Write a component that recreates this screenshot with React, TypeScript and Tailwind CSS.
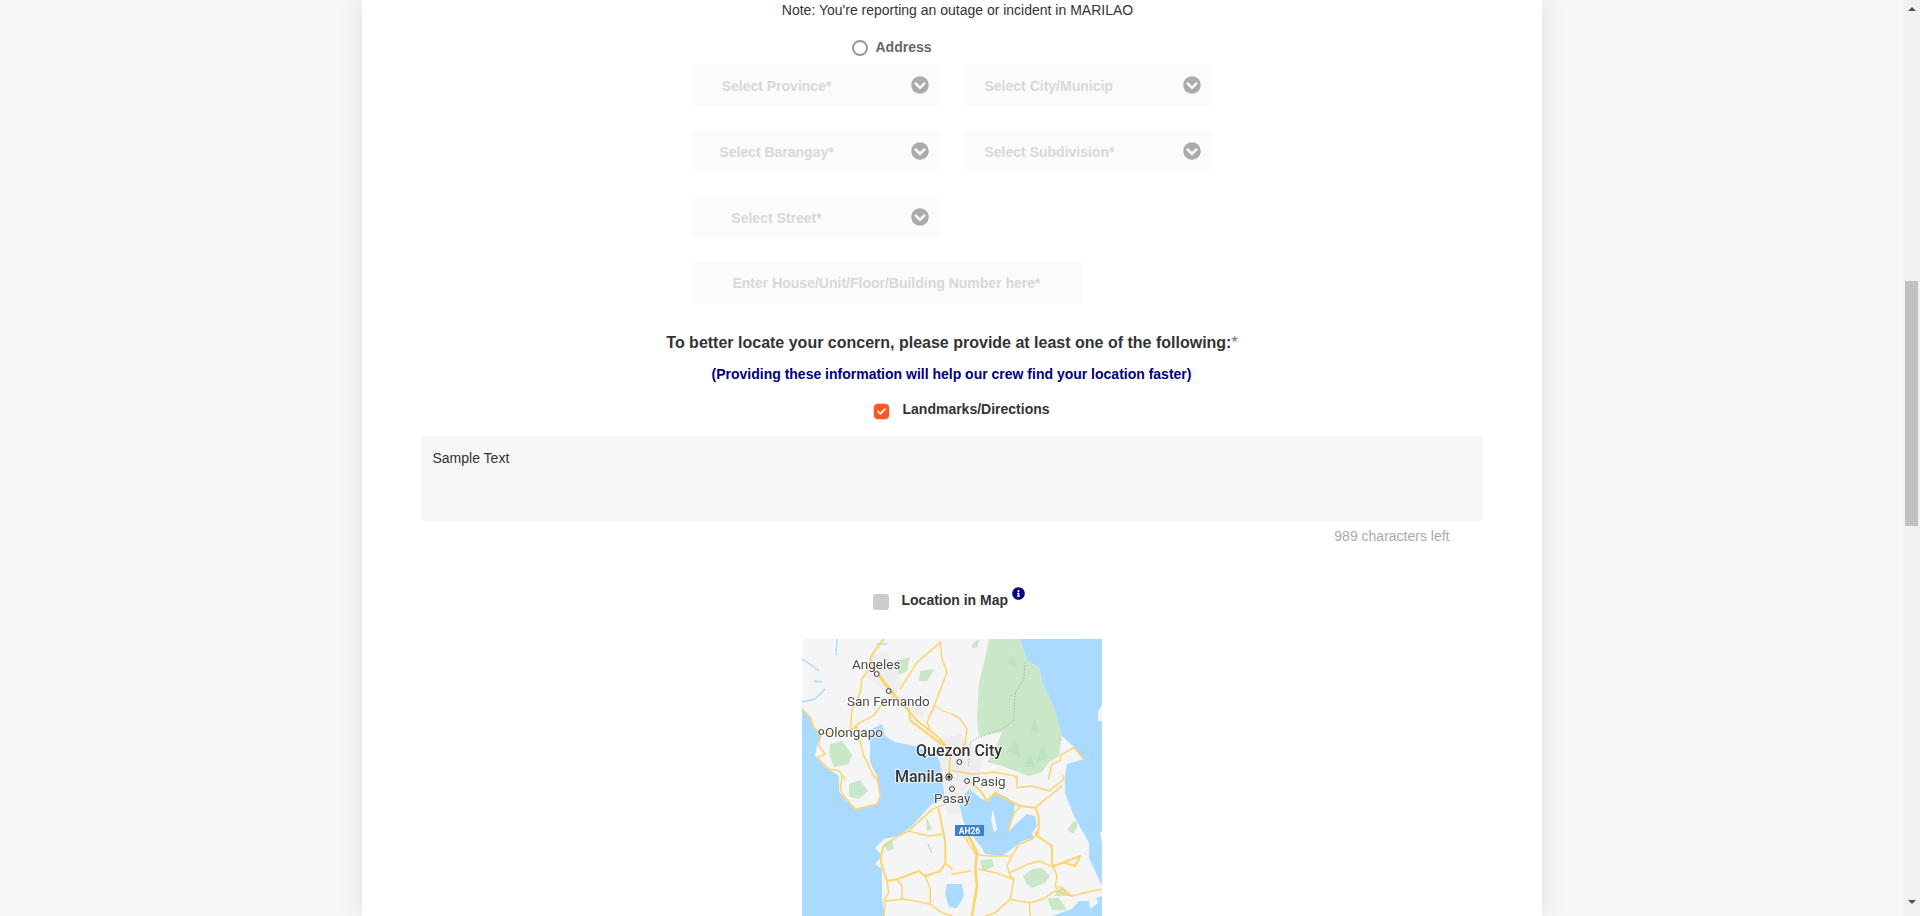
import React from 'react'
import { FaChevronCircleDown, FaCheck, FaInfoCircle } from 'react-icons/fa'

function Road({ d, w = 4.5 }: { d: string; w?: number }) {
  return <path d={d} fill="none" stroke="#fcd46e" strokeWidth={w} strokeLinejoin="round" strokeLinecap="round" />
}

function Place({ x, y, children, big }: { x: number; y: number; children: string; big?: boolean }) {
  return (
    <text
      x={x}
      y={y}
      fontSize={big ? 16 : 13.5}
      fontWeight={big ? 500 : 400}
      fill={big ? '#333333' : '#4a4a4a'}
      stroke="#ffffff"
      strokeWidth="2"
      strokeOpacity="0.75"
      paintOrder="stroke"
      className="font-['Roboto',sans-serif]"
    >
      {children}
    </text>
  )
}

function Dot({ x, y }: { x: number; y: number }) {
  return <circle cx={x} cy={y} r="2.4" fill="#ffffff" stroke="#333333" strokeWidth="1" />
}

// Rough hand drawing of the map tile, each quadrant in its own 450x420 space
function MapTile() {
  return (
    <svg viewBox="0 0 300 277" width="300" height="277" className="block blur-[0.35px]">
      <rect width="300" height="277" fill="#aadaff" />
      {/* land */}
      <path
        fill="#f5f5f5"
        d="M0 0H218L225 22L237 28L240 43L252 68L260 97L272 108L282 120L265 125L263 137L263 154L272 177L287 204L287 219L300 247V257L287 262L277 262L270 270L250 277H83L80 260L80 230L73 225L80 217L73 209L82 200L97 197L110 187L130 165L142 160L143 137L140 127L135 117L113 107L93 103L83 97L80 85L70 90L68 100L68 123L75 137L78 157L75 165L53 170L42 159L37 152L37 137L23 128L13 117L15 107L20 97L12 88L8 78L0 70Z"
      />
      <path fill="#f5f5f5" d="M296 73L300 66V82L296 82ZM298 193L300 192V205Z" />
      <path fill="#f5f5f5" d="M287 262L294 258L296 264L288 270Z" />
      {/* urban areas */}
      <g fill="#eeeeee">
        <path d="M68 15L85 14L100 45L90 60L75 45L64 38Z" />
        <path d="M135 100L160 95L180 120L175 150L165 175L145 175L140 140Z" />
        <path d="M100 55L125 70L120 80L105 70Z" />
      </g>
      {/* lakes */}
      <path
        fill="#aadaff"
        d="M167 150L180 160L187 162L193 155L203 157L213 165L212 174L207 192L215 184L225 175L233 177L235 187L230 194L232 199L220 202L210 210L200 217L183 215L180 209L173 200L163 187L160 177L158 167L162 157Z"
      />
      <path fill="#f5f5f5" d="M191 170L195 190L192 194L189 180Z" />
      <path fill="#aadaff" d="M145 245L160 245L162 257L155 269L147 268L143 255Z" />
      {/* rivers */}
      <g fill="none" stroke="#aadaff" strokeWidth="1.4">
        <path d="M0 20L8 25L17 32" />
        <path d="M12 42L20 43" />
        <path d="M0 63L13 60L23 50" />
        <path d="M35 0L34 16" />
        <path d="M85 5L75 5" />
        <path d="M233 75L234 78" />
        <path d="M184 60L183 80" strokeWidth="2" />
        <path d="M126 205L130 214" />
      </g>
      {/* parks */}
      <g fill="#c8e8c8">
        <path d="M187 0H218L225 22L237 28L240 43L252 68L260 97L257 117L247 123L240 133L227 137L200 127L185 123L193 110L200 93L177 97L175 80L177 43L183 20Z" />
        <path d="M28 105L40 102L50 115L47 125L32 128L27 115Z" />
        <path d="M47 145L58 141L66 152L57 160L47 158Z" />
        <path d="M92 22L108 18L105 32L97 36ZM118 32L133 30L125 42L117 42Z" />
        <path d="M221 237L230 230L240 229L248 237L243 244L230 249L225 245Z" />
        <path d="M178 221L190 220L192 227L183 232L180 230Z" />
        <path d="M265 191L272 182L276 184L272 195Z" />
        <path d="M245 259L257 259L265 271L250 271ZM252 257L260 247L270 257Z" />
        <path d="M82 205L90 200L92 210L85 212Z" />
        <path d="M124 178L130 190L125 192Z" />
        <path d="M170 5L177 0L176 8L170 9Z" />
      </g>
      <g fill="#bde2c0">
        <path d="M210 15L216 28L205 25Z" />
        <path d="M232 80L238 94L228 92Z" />
        <path d="M213 100L218 118L205 112Z" />
        <path d="M240 105L246 118L234 125Z" />
        <path d="M228 115L234 128L222 128Z" />
      </g>
      {/* roads, north west */}
      <g transform="scale(0.3333)">
        <Road w={6} d="M245 0L215 40L205 60L220 100L260 150L310 205L345 245L410 295L430 320L445 350L440 420" />
        <Road w={6} d="M225 100L280 170L320 210L325 245L365 275L425 320" />
        <Road d="M415 10L380 40L345 70L320 110L295 150" />
        <Road d="M415 10L420 60L435 100L420 140L395 205L375 250L385 270" />
        <Road d="M205 85L180 120L175 160L150 210L145 270" />
        <Road d="M150 270L175 250L215 230L240 195L275 175" />
        <Road d="M150 270L165 265L175 310L185 350L200 380L220 420" />
        <Road d="M0 210L25 235L35 265L55 285L140 275" />
        <Road d="M55 290L50 320L70 345L45 355L80 390L110 395L130 420" />
        <Road w={3} d="M390 220L400 200L420 215L450 225" />
      </g>
      {/* roads, north east */}
      <g transform="translate(150 0) scale(0.3333)">
        <Road d="M0 225L25 240L45 270L40 310L30 340L15 350" />
        <Road d="M290 420L300 375L325 365L325 350L365 325L395 360" />
        <Road d="M0 395L60 405L130 400L185 410L195 420" />
        <path d="M220 70L215 120L190 160L185 245L150 270L80 295L55 310L50 380" fill="none" stroke="#a8a8a8" strokeWidth="2.5" strokeDasharray="5 4" />
      </g>
      {/* roads, south west */}
      <g transform="translate(0 137) scale(0.3333)">
        <Road d="M120 0L115 40L125 60L160 100L225 85L235 60L225 0" />
        <Road d="M245 210L290 180L320 165L380 180L420 175" />
        <Road d="M320 165L390 100L430 85" />
        <Road w={6} d="M410 100L430 200L430 260L415 285L370 300L350 285L285 310L255 315L240 270L235 245L245 210" />
        <Road d="M285 310L300 330L300 370L250 375L245 420" />
        <Road d="M255 315L260 350L245 375" />
        <Road d="M300 368L340 375L385 385L420 410L450 420" />
        <Road d="M370 300L385 340L385 385" />
        <Road d="M430 260L450 280" />
      </g>
      {/* roads, south east */}
      <g transform="translate(150 137) scale(0.3333)">
        <Road w={6} d="M60 20L90 50L105 75L130 50L165 70L205 90L250 95L260 120L260 160L250 175L270 190L300 210L300 260L305 270L385 240L370 270L335 260L305 270" />
        <Road d="M195 0L195 35L240 30L290 45L335 10L335 0" />
        <Road d="M205 90L185 115L165 170" />
        <Road d="M250 95L330 30" />
        <Road w={8} d="M45 170L60 200L75 230L70 280L75 330L60 420" />
        <Road d="M30 170L70 235L105 240L180 240L200 205L240 190L260 170" />
        <Road d="M180 240L165 270L175 300L185 310L175 370L200 375L235 380L270 370L310 345L360 360L420 345L450 340" />
        <Road d="M175 290L225 265L265 255L305 275L315 300L310 330L320 345" />
        <Road d="M185 310L130 290L80 280" />
        <Road d="M0 295L55 285" />
        <Road d="M232 380L235 420" />
        <Road d="M320 330L360 360" />
        <Road d="M175 370L130 410L100 420" />
      </g>
      <Place x={50} y={30}>Angeles</Place>
      <Place x={45} y={67}>San Fernando</Place>
      <Place x={23} y={98}>Olongapo</Place>
      <Place x={114} y={117} big>Quezon City</Place>
      <Place x={93} y={143} big>Manila</Place>
      <Place x={170} y={147}>Pasig</Place>
      <Place x={132} y={164}>Pasay</Place>
      <Dot x={74.7} y={35} />
      <Dot x={86.7} y={52} />
      <Dot x={19.3} y={93} />
      <Dot x={157.3} y={123} />
      <Dot x={165} y={142} />
      <Dot x={150} y={150} />
      <circle cx="147" cy="138" r="3.2" fill="#ffffff" stroke="#222222" strokeWidth="1" />
      <circle cx="147" cy="138" r="1.7" fill="#222222" />
      <rect x="153" y="186" width="29" height="11" fill="#3f7fc9" />
      <text x="167.5" y="195" fontSize="8.5" fontWeight="700" fill="#ffffff" textAnchor="middle" className="font-['Roboto',sans-serif]">AH26</text>
    </svg>
  )
}

function SelectBox({ label, first }: { label: string; first?: boolean }) {
  return (
    <div className="flex h-[42px] w-[248px] items-center justify-between rounded bg-[#fbfbfb] pr-[11px]">
      {first ? (
        <span className="w-[170px] pt-[2px] text-center text-sm font-bold text-[#d8d8d8]">{label}</span>
      ) : (
        <span className="pt-[2px] pl-[21px] text-sm font-bold text-[#d8d8d8]">{label}</span>
      )}
      <FaChevronCircleDown className="size-[18px] text-[#ababab]" />
    </div>
  )
}

export default function App() {
  return (
    <div className="flex h-[916px] w-full overflow-hidden bg-[#f7f7f7] font-['Liberation_Sans',Arial,sans-serif] text-[#333]">
      <div className="flex-1">
        <div className="mx-auto h-[916px] w-[1180px] overflow-hidden bg-white shadow-[0_0_25px_rgba(0,0,0,0.1)]">
          <p className="h-5 pl-3 text-center text-sm leading-5">Note: You're reporting an outage or incident in MARILAO</p>

          <div className="mx-auto w-[520px]">
            <div className="mt-[18px] flex h-5 items-center gap-2 pl-[160px]">
              <span className="size-4 rounded-full border-2 border-[#9a9a9a] bg-white" />
              <span className="-translate-y-px text-sm leading-5 font-bold text-[#666]">Address</span>
            </div>

            <div className="mt-[6px] grid grid-cols-[248px_248px] gap-x-6 gap-y-6">
              <SelectBox first label="Select Province*" />
              <SelectBox label="Select City/Municip" />
              <SelectBox first label="Select Barangay*" />
              <SelectBox label="Select Subdivision*" />
              <SelectBox first label="Select Street*" />
              <div />
              <div className="col-span-2 flex h-[42px] w-[390px] items-center justify-center bg-[#fbfbfb] text-sm font-bold text-[#d8d8d8]">
                Enter House/Unit/Floor/Building Number here*
              </div>
            </div>
          </div>

          <h2 className="mt-[27px] h-6 pl-px text-center text-base leading-6 font-bold">
            To better locate your concern, please provide at least one of the following:<span className="font-normal text-[#5a7a9a]">*</span>
          </h2>
          <p className="mt-[9px] h-5 text-center text-sm leading-5 font-bold text-[#000080]">
            (Providing these information will help our crew find your location faster)
          </p>

          <div className="mx-auto w-[520px]">
            <div className="mt-[19px] flex h-4 items-center pl-[182px]">
              <span className="flex size-[15px] items-center justify-center rounded-[3px] bg-[#ff5722] outline outline-[#ddd]">
                <FaCheck className="size-[9px] text-white" />
              </span>
              <span className="ml-[14px] -translate-y-[2px] text-sm leading-4 font-bold">Landmarks/Directions</span>
            </div>
          </div>

          <div className="mx-auto mt-[17px] h-[85px] w-[1062px] rounded bg-[#f6f6f6] px-3 py-3 text-sm leading-5">Sample Text</div>
          <p className="mx-auto mt-[5px] h-5 w-[1062px] pr-[33px] text-right text-sm leading-5 text-[#aaa]">989 characters left</p>

          <div className="mx-auto w-[520px]">
            <div className="mt-12 flex h-4 items-center pl-[181px]">
              <span className="size-4 rounded-[3px] bg-[#cccccc]" />
              <span className="ml-[13px] -translate-y-[2px] text-sm leading-4 font-bold">Location in Map</span>
              <FaInfoCircle className="ml-1 size-[13px] -translate-y-[9px] text-[#000080]" />
            </div>
          </div>

          <div className="mx-auto mt-[29px] w-[300px]">
            <MapTile />
          </div>
        </div>
      </div>

      {/* browser scrollbar */}
      <div className="flex w-[17px] flex-col items-center bg-[#f1f1f1]">
        <svg width="8" height="4" viewBox="0 0 8 4" className="mt-[7px]">
          <path d="M4 0L8 4H0Z" fill="#505050" />
        </svg>
        <div className="mt-[270px] h-[245px] w-[13px] bg-[#c1c1c1]" />
        <svg width="8" height="4" viewBox="0 0 8 4" className="mt-[374px]">
          <path d="M0 0H8L4 4Z" fill="#505050" />
        </svg>
      </div>
    </div>
  )
}
